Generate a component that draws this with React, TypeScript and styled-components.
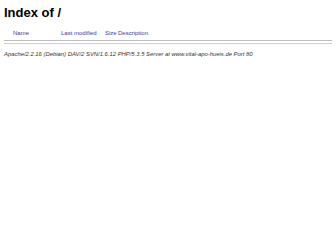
import React from "react";
import styled, { createGlobalStyle } from "styled-components";

const GlobalStyle = createGlobalStyle`
  html, body {
    margin: 0;
    padding: 0;
    background: #ffffff;
  }
  body {
    padding: 4px;
    font-family: "Liberation Sans", Arial, sans-serif;
    color: #000;
  }
`;

const Title = styled.h1`
  margin: 0 0 8px 0;
  padding-top: 1px;
  font-size: 13px;
  font-weight: bold;
  line-height: 16px;
`;

const Listing = styled.div`
  display: grid;
  grid-template-columns: 9px 48px 44px 13px auto;
  font-size: 6px;
  line-height: 8px;
`;

const HeadCell = styled.div`
  white-space: nowrap;
`;

const HeadLink = styled.a`
  color: #3a3aa0;
  text-decoration: none;
`;

const Rule = styled.hr`
  margin: 3px 0 0 0;
  border: none;
  border-top: 1px solid #bdbdbd;
  border-bottom: 1px solid #cfcfcf;
  box-sizing: border-box;
  height: 4px;
`;

const Footer = styled.address`
  margin-top: 7px;
  font-size: 5.88px;
  font-style: italic;
  color: #333;
  white-space: nowrap;
`;

export default function App() {
  return (
    <>
      <GlobalStyle />
      <Title>Index of /</Title>
      <Listing>
        <HeadCell />
        <HeadCell>
          <HeadLink href="?C=N;O=D">Name</HeadLink>
        </HeadCell>
        <HeadCell>
          <HeadLink href="?C=M;O=A">Last modified</HeadLink>
        </HeadCell>
        <HeadCell>
          <HeadLink href="?C=S;O=A">Size</HeadLink>
        </HeadCell>
        <HeadCell>
          <HeadLink href="?C=D;O=A">Description</HeadLink>
        </HeadCell>
      </Listing>
      <Rule />
      <Footer>
        Apache/2.2.16 (Debian) DAV/2 SVN/1.6.12 PHP/5.3.5 Server at
        www.vital-apo-hueis.de Port 80
      </Footer>
    </>
  );
}
